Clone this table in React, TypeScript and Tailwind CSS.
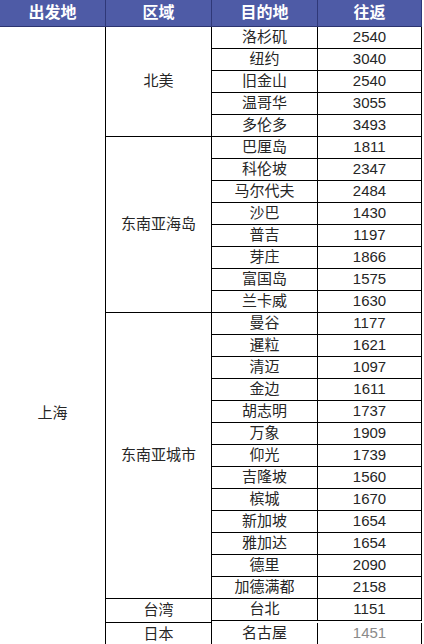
const groups: { region: string; rows: [string, string][] }[] = [
  {
    region: '北美',
    rows: [
      ['洛杉矶', '2540'],
      ['纽约', '3040'],
      ['旧金山', '2540'],
      ['温哥华', '3055'],
      ['多伦多', '3493'],
    ],
  },
  {
    region: '东南亚海岛',
    rows: [
      ['巴厘岛', '1811'],
      ['科伦坡', '2347'],
      ['马尔代夫', '2484'],
      ['沙巴', '1430'],
      ['普吉', '1197'],
      ['芽庄', '1866'],
      ['富国岛', '1575'],
      ['兰卡威', '1630'],
    ],
  },
  {
    region: '东南亚城市',
    rows: [
      ['曼谷', '1177'],
      ['暹粒', '1621'],
      ['清迈', '1097'],
      ['金边', '1611'],
      ['胡志明', '1737'],
      ['万象', '1909'],
      ['仰光', '1739'],
      ['吉隆坡', '1560'],
      ['槟城', '1670'],
      ['新加坡', '1654'],
      ['雅加达', '1654'],
      ['德里', '2090'],
      ['加德满都', '2158'],
    ],
  },
  { region: '台湾', rows: [['台北', '1151']] },
  { region: '日本', rows: [['名古屋', '1451']] },
];

const headers = [
  { label: '出发地', w: 'w-[106px]' },
  { label: '区域', w: 'w-[106px]' },
  { label: '目的地', w: 'w-[106px]' },
  { label: '往返', w: 'w-[104px]' },
];

export default function App() {
  return (
    <div className="min-h-screen bg-white font-['Liberation_Sans','Noto_Sans_CJK_SC',sans-serif] text-[15px] text-[#262626]">
      <div className="w-[422px]">
        <div className="flex h-[27px] border-b border-[#2c3470] bg-[#4e5ba6]">
          {headers.map((h) => (
            <div
              key={h.label}
              className={`${h.w} flex items-center justify-center border-r border-[#2f3878] text-[16px] font-bold text-white`}
            >
              {h.label}
            </div>
          ))}
        </div>

        <div className="flex">
          {/* the origin cell runs on past the crop, so its label sits low */}
          <div className="flex w-[106px] items-center justify-center border-r border-black pt-[154px]">
            上海
          </div>

          <div className="flex w-[316px] flex-col">
            {groups.map((g, gi) => (
              <div key={gi} className="flex">
                <div className="flex w-[106px] items-center justify-center border-r border-b border-black">
                  {g.region}
                </div>
                <div className="flex flex-col">
                  {g.rows.map(([dest, price]) => (
                    <div
                      key={dest}
                      className="flex h-[22px] border-b border-black"
                    >
                      <div className="flex w-[106px] items-center justify-center border-r border-black">
                        {dest}
                      </div>
                      <div
                        className={`flex w-[104px] items-center justify-center border-r border-black ${
                          price === '1451'
                            ? 'text-[#8a8a8a]'
                            : ''
                        }`}
                      >
                        {price}
                      </div>
                    </div>
                  ))}
                </div>
              </div>
            ))}
          </div>
        </div>
      </div>
    </div>
  );
}
